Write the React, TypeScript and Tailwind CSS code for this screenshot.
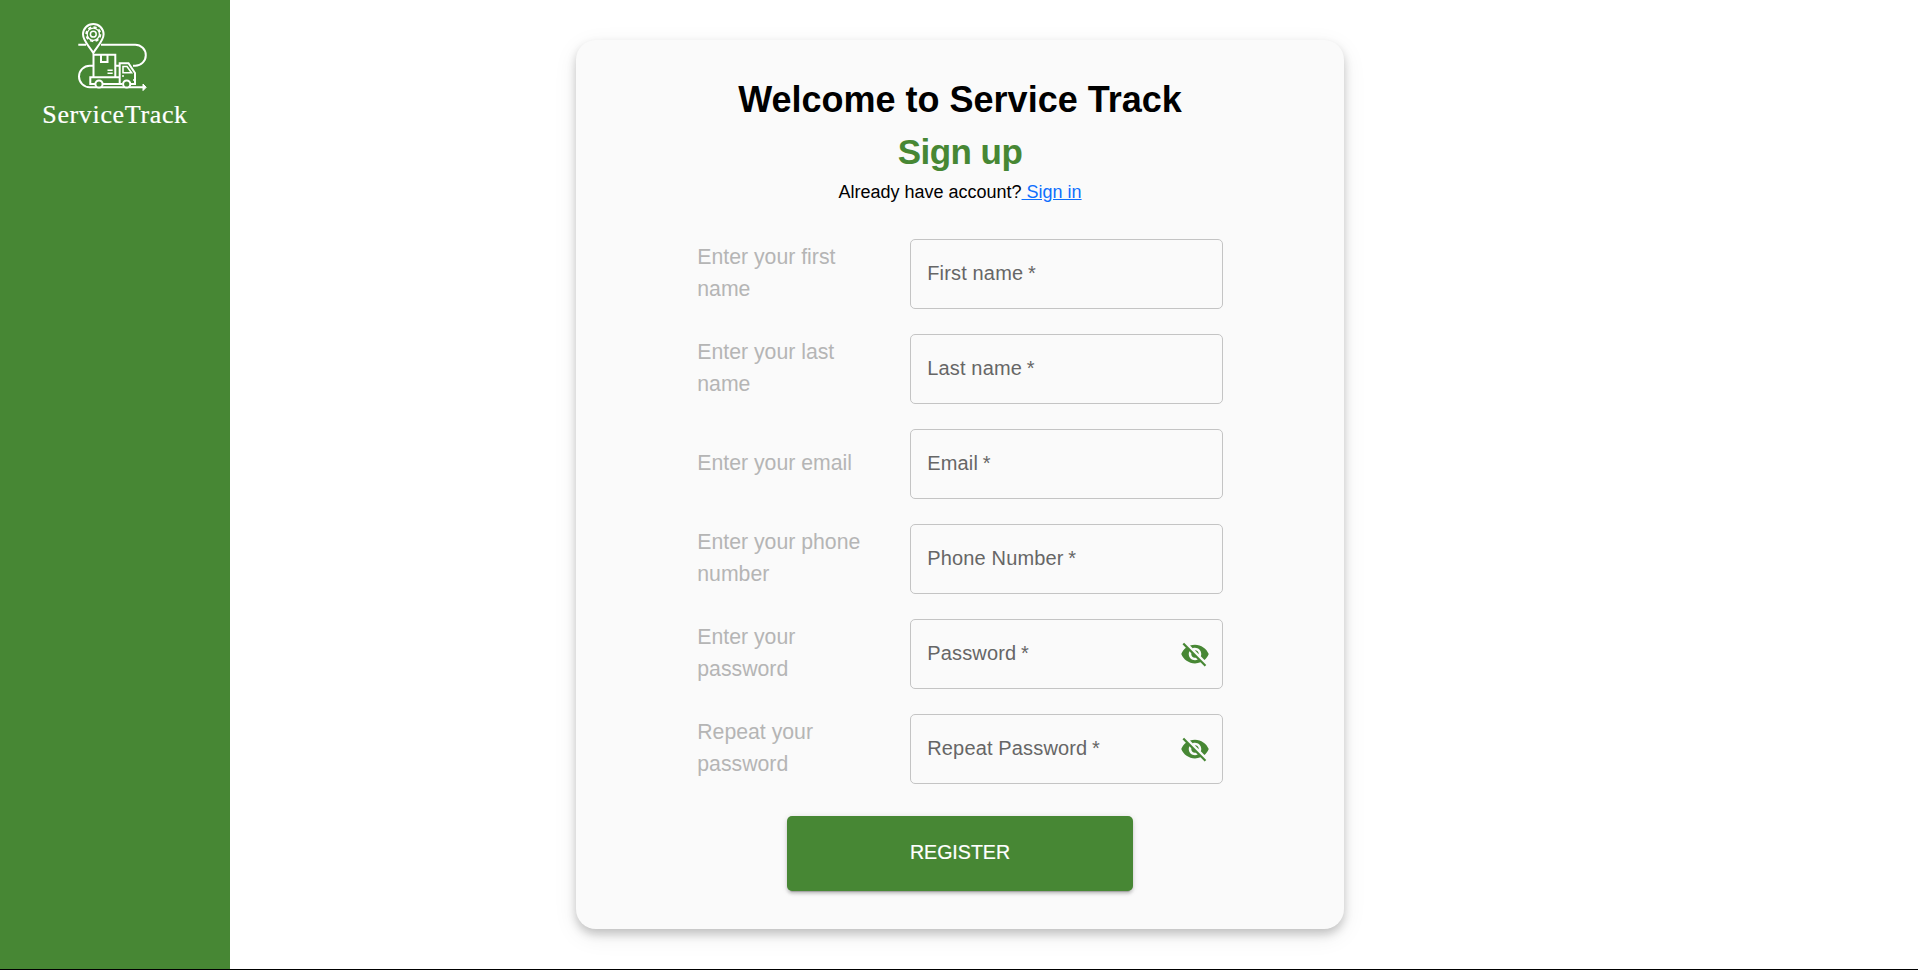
import { useState } from "react";

type Field = { hint: string; label: string; secret?: boolean };

const fields: Field[] = [
  { hint: "Enter your first name", label: "First name" },
  { hint: "Enter your last name", label: "Last name" },
  { hint: "Enter your email", label: "Email" },
  { hint: "Enter your phone number", label: "Phone Number" },
  { hint: "Enter your password", label: "Password", secret: true },
  { hint: "Repeat your password", label: "Repeat Password", secret: true },
];

function VisibilityOff() {
  return (
    <svg viewBox="0 0 24 24" className="h-[30px] w-[30px] fill-[#478734]">
      <path d="M12 7c2.76 0 5 2.24 5 5 0 .65-.13 1.26-.36 1.83l2.92 2.92c1.51-1.26 2.7-2.89 3.43-4.75-1.73-4.39-6-7.5-11-7.5-1.4 0-2.74.25-3.98.7l2.16 2.16C10.74 7.13 11.35 7 12 7zM2 4.27l2.28 2.28.46.46C3.08 8.3 1.78 10.02 1 12c1.73 4.39 6 7.5 11 7.5 1.55 0 3.03-.3 4.38-.84l.42.42L19.73 22 21 20.73 3.27 3 2 4.27zM7.53 9.8l1.55 1.55c-.05.21-.08.43-.08.65 0 1.66 1.34 3 3 3 .22 0 .44-.03.65-.08l1.55 1.55c-.67.33-1.41.53-2.2.53-2.76 0-5-2.24-5-5 0-.79.2-1.53.53-2.2zm4.31-.78l3.15 3.15.02-.16c0-1.66-1.34-3-3-3l-.17.01z" />
    </svg>
  );
}

function Logo() {
  return (
    <div className="flex flex-col items-center text-white">
      <svg viewBox="76 20 72 72" className="mr-[6px] h-[72px] w-[72px]" fill="none" stroke="currentColor" strokeWidth="2">
        <path d="M78.300 44.700H86M101 44.700H135.300a10.500 10.500 0 0 1 0 21H133M115.700 65.700H119" />
        <path d="M93 65.700H89.800a10.800 10.800 0 0 0 0 21.600H143" />
        <path d="M93.300 53C90 47 83 41 83 34.300a10.300 10.300 0 0 1 20.600 0C103.600 41 96.500 47 93.300 53Z" />
        <circle cx="93.300" cy="34.200" r="7.100" strokeWidth="1.800" strokeDasharray="3.200 2.376" />
        <circle cx="93.300" cy="34.200" r="6.100" strokeWidth="1.300" />
        <circle cx="93.300" cy="34.200" r="2.900" strokeWidth="1.500" />
        <path d="M93.500 77V54.700H115.300V77M101 55V62H107.500V55" />
        <path d="M107.500 70.300H112.700M107.500 73.300H112.700" strokeWidth="1.500" />
        <path d="M95 84H90.300V77.300H119.500M103 84H122.500M119.700 84.500V63.200H128.500L135 73V84H131" />
        <path d="M123 66.500H127L131.500 72.700H123ZM122 76H124M135 80H133" strokeWidth="1.600" />
        <circle cx="99" cy="84" r="3.600" className="fill-[#478734]" />
        <circle cx="126.700" cy="84" r="3.600" className="fill-[#478734]" />
        <path d="M143 84L146.200 87.300L143 90.600Z" fill="currentColor" strokeWidth="1" />
      </svg>
      <div className="mt-[7px] font-['Liberation_Serif',serif] text-[26px] leading-[32px] tracking-[0.650px] [-webkit-text-stroke:0.2px_white]">ServiceTrack</div>
    </div>
  );
}

function FormRow({ hint, label, secret }: Field) {
  const [focused, setFocused] = useState(false);
  const [value, setValue] = useState("");
  return (
    <label className="flex h-[70px] items-center">
      <span className="w-[212.500px] pr-[34px] text-[21.250px] leading-[31.875px] text-[#b5b5b5]">{hint}</span>
      <span className="grid h-[70px] w-[313px] grid-cols-[1fr_auto] items-center rounded-[5px] border border-[#c4c4c4] pr-[12px] pl-[16.500px]">
        <input
          className="col-start-1 row-start-1 w-full bg-transparent text-[20px] outline-none"
          type={secret ? "password" : "text"}
          value={value}
          onChange={(e) => setValue(e.target.value)}
          onFocus={() => setFocused(true)}
          onBlur={() => setFocused(false)}
        />
        {!focused && !value && (
          <span className="pointer-events-none col-start-1 row-start-1 pb-[2px] text-[20px] leading-[29px] tracking-[0.150px] whitespace-nowrap text-[#666]">
            {label} <span className="-ml-[1px]">*</span>
          </span>
        )}
        {secret && (
          <button type="button" className="col-start-2 row-start-1" aria-label="Show password">
            <VisibilityOff />
          </button>
        )}
      </span>
    </label>
  );
}

export default function App() {
  return (
    <div className="flex h-[970px] w-full flex-col bg-white font-['Liberation_Sans',Arial,sans-serif]">
      <div className="flex min-h-0 flex-1">
        <aside className="flex w-[230px] justify-center bg-[#478734] pt-[20px]">
          <Logo />
        </aside>
        <main className="flex flex-1 pt-[40px] pl-[346px]">
          <section className="flex h-[889px] w-[768px] flex-col items-center rounded-[20px] bg-[#fafafa] pt-[35px] shadow-[0_5px_10px_rgba(0,0,0,0.2),0_7px_25px_rgba(0,0,0,0.08)]">
            <h1 className="text-[36px] leading-[50px] font-bold text-black">Welcome to Service Track</h1>
            <h2 className="text-[35px] leading-[54px] font-bold tracking-[-0.550px] text-[#478734]">Sign up</h2>
            <p className="text-[18px] leading-[27px] text-black">
              Already have account?
              <a href="#signin" className="text-[#0d6efd] underline"> Sign in</a>
            </p>
            <form className="mt-[33px] flex flex-col items-center" onSubmit={(e) => e.preventDefault()}>
              <div className="flex flex-col gap-[25px]">
                {fields.map((field) => (
                  <FormRow key={field.label} {...field} />
                ))}
              </div>
              <button className="mt-[32px] h-[75px] w-[346px] rounded-[5px] bg-[#478734] pb-[2px] text-[19.600px] text-white shadow-[0_4px_1px_-3px_rgba(0,0,0,0.2),0_3px_3px_rgba(0,0,0,0.14),0_1px_6px_rgba(0,0,0,0.12)] [-webkit-text-stroke:0.2px_white]">
                REGISTER
              </button>
            </form>
          </section>
        </main>
      </div>
      <footer className="h-px bg-black" />
    </div>
  );
}
